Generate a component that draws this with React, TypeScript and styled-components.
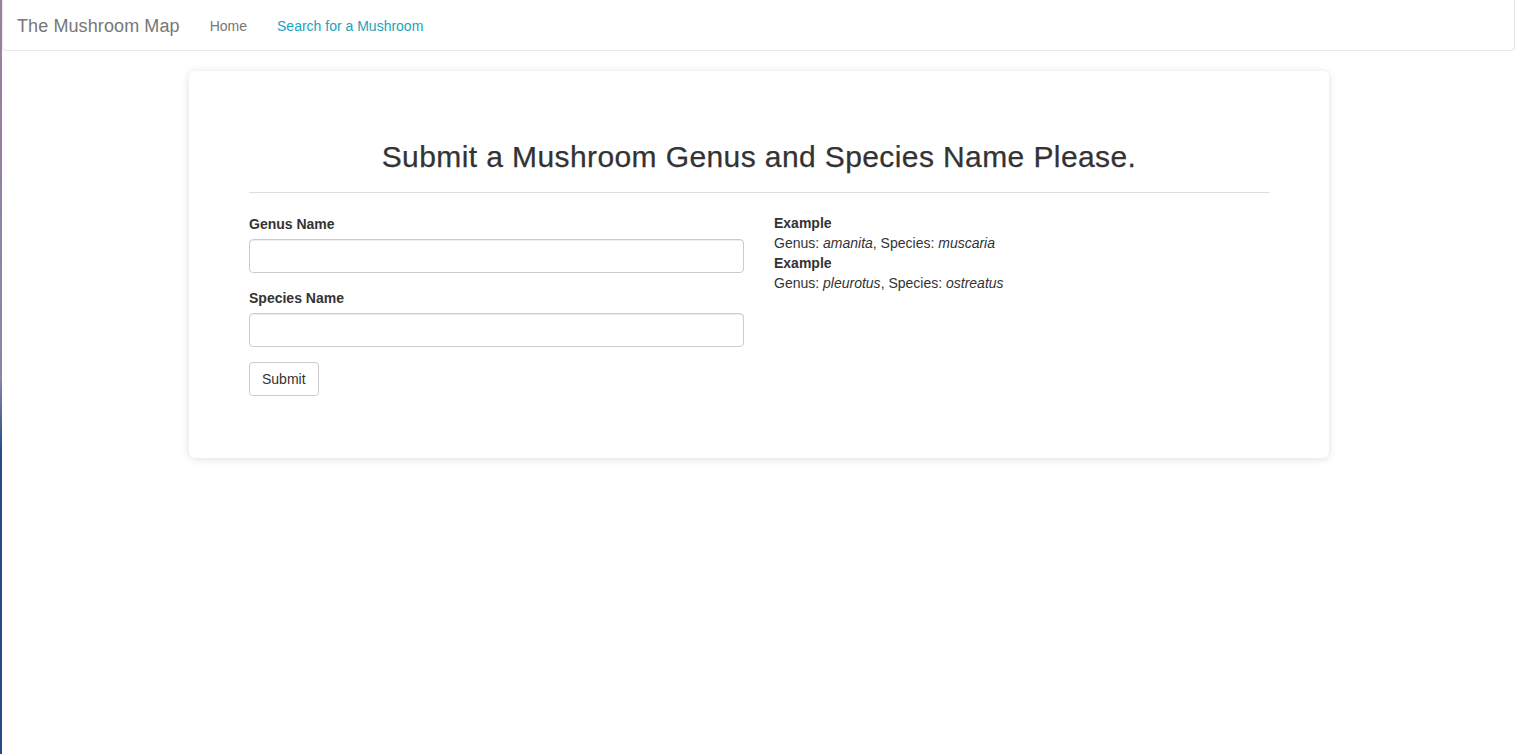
import React from "react";
import styled, { createGlobalStyle } from "styled-components";

const GlobalStyle = createGlobalStyle`
  html, body {
    margin: 0;
    padding: 0;
    background: #ffffff;
    font-family: "Liberation Sans", Arial, Helvetica, sans-serif;
    font-size: 14px;
    line-height: 20px;
    color: #333333;
  }
  * { box-sizing: border-box; }
`;

const Page = styled.div`
  min-height: 754px;
  border-left: 2px solid #8a7a9a;
  border-image: linear-gradient(to bottom, #9a7fa0 0%, #8b86a6 50%, #1f4f8a 60%, #1f4f8a 100%) 1;
  border-top: 0;
  border-right: 0;
  border-bottom: 0;
`;

const Navbar = styled.nav`
  display: flex;
  align-items: flex-start;
  height: 51px;
  padding-top: 2px;
  margin-right: 1px;
  background: #ffffff;
  border: 1px solid #e7e7e7;
  border-top: 0;
  border-radius: 0 0 4px 4px;
`;

const Brand = styled.a`
  padding: 0 15px 0 14px;
  font-size: 18px;
  line-height: 48px;
  color: #777777;
  text-decoration: none;
  letter-spacing: 0.1px;
`;

const NavList = styled.ul`
  display: flex;
  list-style: none;
  margin: 0;
  padding: 0;
`;

const NavLink = styled.a<{ $active?: boolean }>`
  display: block;
  padding: 0 15px;
  line-height: 48px;
  font-size: 14px;
  color: ${(p) => (p.$active ? "#1ba3bd" : "#777777")};
  text-decoration: none;
`;

const Main = styled.main`
  display: flex;
  justify-content: center;
  padding-top: 20px;
`;

const Card = styled.section`
  width: 1140px;
  background: #ffffff;
  border-radius: 6px;
  box-shadow: 0 1px 8px rgba(0, 0, 0, 0.13);
  padding: 60px 60px 62px;
`;

const Heading = styled.h1`
  margin: 9px 0 19px;
  font-size: 30px;
  line-height: 33px;
  font-weight: 400;
  letter-spacing: 0.4px;
  -webkit-text-stroke: 0.25px #333333;
  text-align: center;
  color: #333333;
`;

const Rule = styled.hr`
  margin: 0 0 21px;
  border: 0;
  border-top: 1px solid #dddddd;
`;

const Columns = styled.div`
  display: grid;
  grid-template-columns: 495px 495px;
  column-gap: 30px;
`;

const FormGroup = styled.div`
  margin-bottom: 15px;
`;

const Label = styled.label`
  display: block;
  margin-bottom: 5px;
  font-weight: 700;
`;

const Input = styled.input`
  display: block;
  width: 100%;
  height: 34px;
  padding: 6px 12px;
  font: inherit;
  border: 1px solid #cccccc;
  border-radius: 4px;
  box-shadow: inset 0 1px 1px rgba(0, 0, 0, 0.075);
  outline: none;
`;

const Button = styled.button`
  height: 34px;
  padding: 6px 12px;
  font: inherit;
  color: #333333;
  background: #ffffff;
  border: 1px solid #cccccc;
  border-radius: 4px;
`;

const Examples = styled.div`
  margin-top: -1px;
`;

const ExampleTitle = styled.div`
  font-weight: 700;
`;

const ExampleLine = styled.div``;

export default function App() {
  return (
    <>
      <GlobalStyle />
      <Page>
        <Navbar>
          <Brand href="#">The Mushroom Map</Brand>
          <NavList>
            <li>
              <NavLink href="#">Home</NavLink>
            </li>
            <li>
              <NavLink href="#" $active>
                Search for a Mushroom
              </NavLink>
            </li>
          </NavList>
        </Navbar>
        <Main>
          <Card>
            <Heading>Submit a Mushroom Genus and Species Name Please.</Heading>
            <Rule />
            <Columns>
              <form onSubmit={(e) => e.preventDefault()}>
                <FormGroup>
                  <Label htmlFor="genus">Genus Name</Label>
                  <Input id="genus" type="text" />
                </FormGroup>
                <FormGroup>
                  <Label htmlFor="species">Species Name</Label>
                  <Input id="species" type="text" />
                </FormGroup>
                <Button type="submit">Submit</Button>
              </form>
              <Examples>
                <ExampleTitle>Example</ExampleTitle>
                <ExampleLine>
                  Genus: <em>amanita</em>, Species: <em>muscaria</em>
                </ExampleLine>
                <ExampleTitle>Example</ExampleTitle>
                <ExampleLine>
                  Genus: <em>pleurotus</em>, Species: <em>ostreatus</em>
                </ExampleLine>
              </Examples>
            </Columns>
          </Card>
        </Main>
      </Page>
    </>
  );
}
